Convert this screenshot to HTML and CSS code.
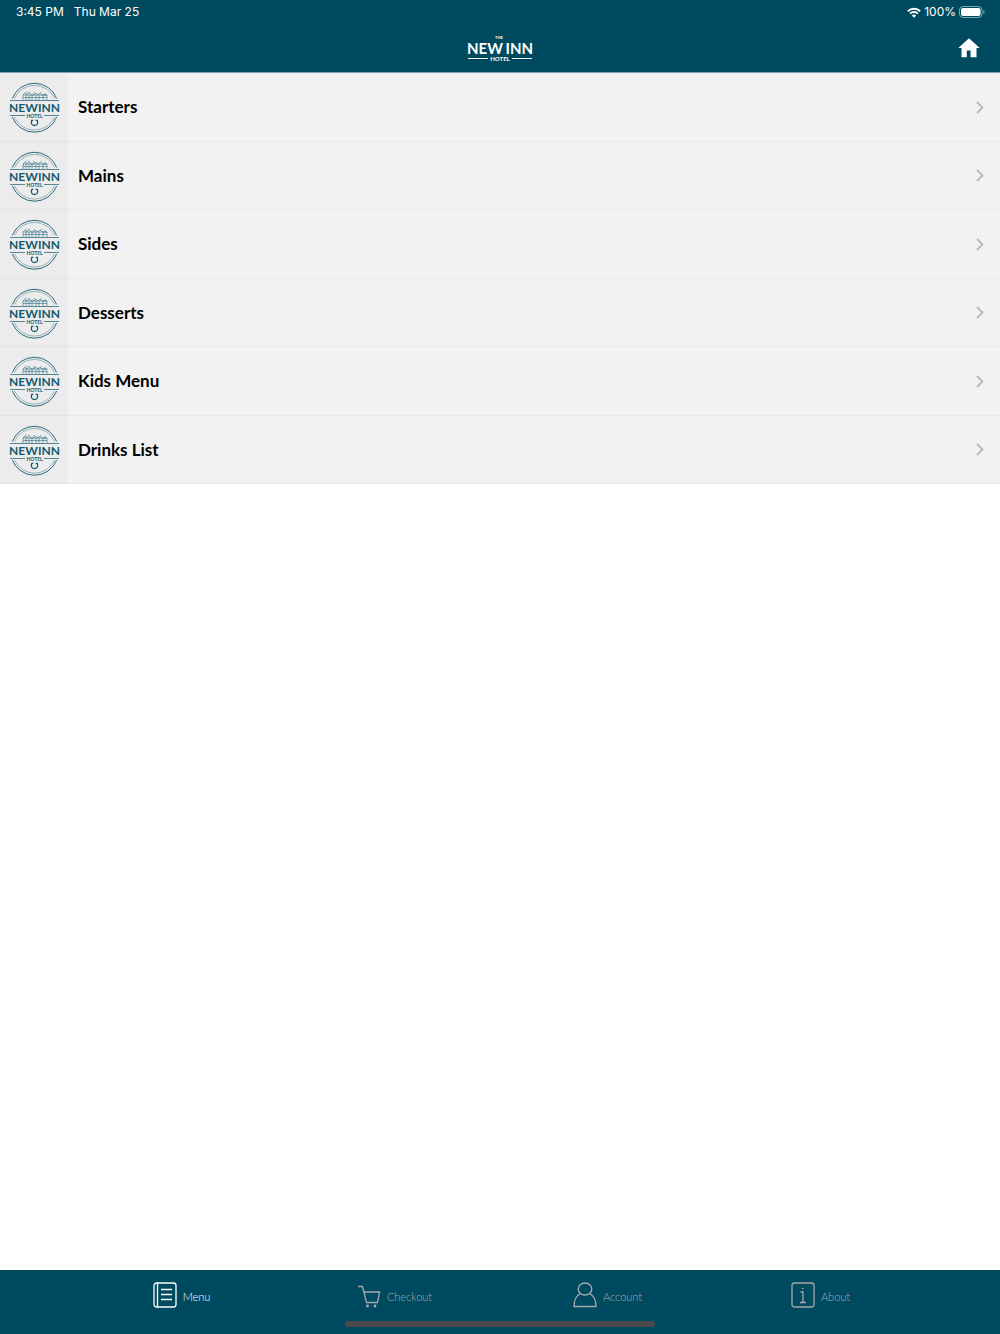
FILE: index.html
```html
<!DOCTYPE html>
<html lang="en">
<head>
<meta charset="utf-8">
<meta name="viewport" content="width=device-width, initial-scale=1">
<title>The New Inn Hotel</title>
<link rel="stylesheet" href="styles.css">
</head>
<body>
<svg class="sprite" aria-hidden="true">
  <symbol id="badge" viewBox="0 0 52 52">
    <g fill="none" stroke="currentColor">
      <path stroke-width=".9" d="M4.300 17.500a23.800 23.800 0 0 1 44.400 0M4.300 36a23.800 23.800 0 0 0 44.400 0"/>
      <path stroke-width=".4" d="M6.500 17.500a21.800 21.800 0 0 1 40 0M6.500 36a21.800 21.800 0 0 0 40 0"/>
      <path stroke-width=".7" d="M2 19.500H51M2 34.500H17M36 34.500H51"/>
      <path stroke-width=".5" d="M15 19v-5l2-2 2 2 2-3 2 3h3l2-2 2 2 2-2 2 2h5v5M15 14h24M15 16.500h24M18 14v5M21 14v5M24 14v5M28 14v5M31 14v5M35 14v5M18 12v-1.500M26 13v-2M33 12v-1M37 14v-2"/>
      <path stroke-width="1.300" d="M25.300 39.300h-1.500c-1 2.600-.5 5.200 2.700 5.200s3.700-2.600 2.700-5.200h-1.500"/>
    </g>
    <g fill="currentColor" class="logo-type">
      <text x="1" y="31" font-size="12">NEW</text>
      <text x="52" y="31" font-size="12" text-anchor="end">INN</text>
      <text x="26.500" y="36.500" font-size="5" text-anchor="middle">HOTEL</text>
    </g>
  </symbol>
  <symbol id="chevron" viewBox="0 0 8 13">
    <path d="M1 1l5.500 5.500L1 12" fill="none" stroke="currentColor" stroke-width="1.800"/>
  </symbol>
</svg>

<header class="header">
  <div class="status">
    <span>3:45 PM</span>
    <span>Thu Mar 25</span>
    <span class="status-right">
      <svg width="14" height="11" viewBox="0 0 14 11" fill="none" stroke="currentColor" stroke-width="1.900" aria-hidden="true">
        <path d="M.8 4.200a9 9 0 0 1 12.400 0M3.100 6.600a5.600 5.600 0 0 1 7.800 0"/>
        <path d="M7 10.800L4.900 8.600a3 3 0 0 1 4.200 0z" fill="currentColor" stroke="none"/>
      </svg>
      <span>100%</span>
      <svg width="26" height="12" viewBox="0 0 26 12" aria-hidden="true">
        <rect x=".5" y=".5" width="22.500" height="11" rx="3.500" fill="none" stroke="#7fa3af"/>
        <rect x="2" y="2" width="19.500" height="8" rx="2" fill="currentColor"/>
        <path d="M24.300 4v4c1-.3 1.200-1 1.200-2s-.2-1.700-1.200-2z" fill="#7fa3af"/>
      </svg>
    </span>
  </div>
  <div class="title-bar">
    <svg class="wordmark logo-type" viewBox="0 0 66 28" role="img" aria-label="The New Inn Hotel">
      <g fill="currentColor">
        <text x="32" y="5" font-size="4" text-anchor="middle">THE</text>
        <text x="0" y="20" font-size="15">NEW</text>
        <text x="66" y="20" font-size="15" text-anchor="end">INN</text>
        <text x="33" y="27" font-size="6" text-anchor="middle">HOTEL</text>
      </g>
      <path d="M1 24.500H21M45 24.500H65" stroke="currentColor" stroke-width="1"/>
    </svg>
    <a class="home" href="#home" aria-label="Home">
      <svg width="22" height="20" viewBox="0 0 22 20" aria-hidden="true">
        <path fill="currentColor" d="M11 .3L.3 10h3.200v9.200h5.300v-6.700h3.800v6.700h5.900V10h3.200z"/>
      </svg>
    </a>
  </div>
</header>

<main class="content">
  <ul class="menu">
    <li><a class="row" href="#starters"><span class="thumb"><svg><use href="#badge"/></svg></span><span class="name">Starters</span><svg class="chevron"><use href="#chevron"/></svg></a></li>
    <li><a class="row" href="#mains"><span class="thumb"><svg><use href="#badge"/></svg></span><span class="name">Mains</span><svg class="chevron"><use href="#chevron"/></svg></a></li>
    <li><a class="row" href="#sides"><span class="thumb"><svg><use href="#badge"/></svg></span><span class="name">Sides</span><svg class="chevron"><use href="#chevron"/></svg></a></li>
    <li><a class="row" href="#desserts"><span class="thumb"><svg><use href="#badge"/></svg></span><span class="name">Desserts</span><svg class="chevron"><use href="#chevron"/></svg></a></li>
    <li><a class="row" href="#kids"><span class="thumb"><svg><use href="#badge"/></svg></span><span class="name">Kids Menu</span><svg class="chevron"><use href="#chevron"/></svg></a></li>
    <li><a class="row" href="#drinks"><span class="thumb"><svg><use href="#badge"/></svg></span><span class="name">Drinks List</span><svg class="chevron"><use href="#chevron"/></svg></a></li>
  </ul>
</main>

<footer class="footer">
  <nav class="tabs">
    <a class="tab active" href="#menu">
      <svg viewBox="0 0 24 26" aria-hidden="true"><rect x="1" y="1" width="22" height="24" rx="2.500"/><path d="M4.500 1v24M8 7.500h11M8 12.500h11M8 17.500h11"/></svg>
      <span>Menu</span>
    </a>
    <a class="tab" href="#checkout">
      <svg viewBox="0 0 24 26" aria-hidden="true"><path d="M1 4.500h4.500L9.500 20.500H20.500L22.500 10H7"/><circle cx="10.500" cy="24" r=".8"/><circle cx="18" cy="24" r=".8"/></svg>
      <span>Checkout</span>
    </a>
    <a class="tab" href="#account">
      <svg viewBox="0 0 24 26" aria-hidden="true"><ellipse cx="12" cy="7" rx="6.800" ry="6"/><path d="M7.500 11.500C3.500 13.500 1 17 1 24.500H23C23 17 20.500 13.500 16.500 11.500"/></svg>
      <span>Account</span>
    </a>
    <a class="tab" href="#about">
      <svg viewBox="0 0 24 26" aria-hidden="true"><rect x="1" y="1" width="22" height="24" rx="2.500"/><path d="M9.500 10H12v10.500M9 20.500h6M11 6.300h1.500"/></svg>
      <span>About</span>
    </a>
  </nav>
  <div class="home-indicator"></div>
</footer>
</body>
</html>
```
FILE: styles.css
```css
* { box-sizing: border-box; }

body {
  display: flex;
  flex-direction: column;
  min-height: 100vh;
  margin: 0;
  background: #fff;
  font-family: Lato, "Liberation Sans", sans-serif;
}

a { color: inherit; text-decoration: none; }
svg { display: block; flex: none; }
.sprite { display: none; }
.logo-type { font-family: Lato, sans-serif; font-weight: 700; }

.header {
  background: #004a60;
  border-bottom: 1px solid #80a4af;
  color: #fff;
}

.status {
  display: flex;
  align-items: center;
  gap: 10px;
  height: 24px;
  padding: 0 15px 0 16px;
  font: 400 12px/24px Inter, sans-serif;
}

.status-right {
  display: flex;
  align-items: center;
  gap: 3px;
  margin-left: auto;
}

.title-bar {
  display: grid;
  grid-template-columns: 1fr 66px 1fr;
  align-items: center;
  height: 48px;
  padding: 0 20px;
}

.wordmark { grid-column: 2; width: 66px; height: 28px; }
.home { justify-self: end; }

.content { flex: 1; }

.menu {
  display: grid;
  grid-auto-rows: 1fr;
  min-height: 411px;
  margin: 0;
  padding: 0;
  list-style: none;
  background: #f2f2f2;
}

.row {
  display: flex;
  align-items: center;
  height: 100%;
  padding-right: 16px;
  background: linear-gradient(#e8e8e8, #e8e8e8) bottom / 100% 1px no-repeat;
}

.thumb {
  display: grid;
  place-items: center;
  align-self: stretch;
  width: 68px;
  background: rgb(0 0 0 / 2.5%);
  color: #135a70;
}

.thumb svg { width: 52px; height: 52px; }

.name {
  flex: 1;
  padding-left: 10px;
  color: #000;
  font-size: 17px;
  font-weight: 700;
  line-height: 24px;
}

.chevron { width: 8px; height: 13px; color: #b8b8b8; }

.footer {
  padding-bottom: 7px;
  background: #004a60;
}

.tabs {
  display: grid;
  grid-template-columns: repeat(4, 1fr);
  padding: 12px 73px 9px 75px;
}

.tab {
  display: flex;
  justify-content: center;
  gap: 6px;
  color: #a6a8a9;
  font-size: 11px;
  font-weight: 300;
  line-height: 30px;
}

.tab svg {
  width: 24px;
  height: 26px;
  fill: none;
  stroke: currentColor;
  stroke-width: 1.3px;
}

.active { color: #fff; }

.home-indicator {
  width: 31%;
  height: 6px;
  margin: 0 auto;
  border-radius: 3px;
  background: #4b4b4d;
}
```
